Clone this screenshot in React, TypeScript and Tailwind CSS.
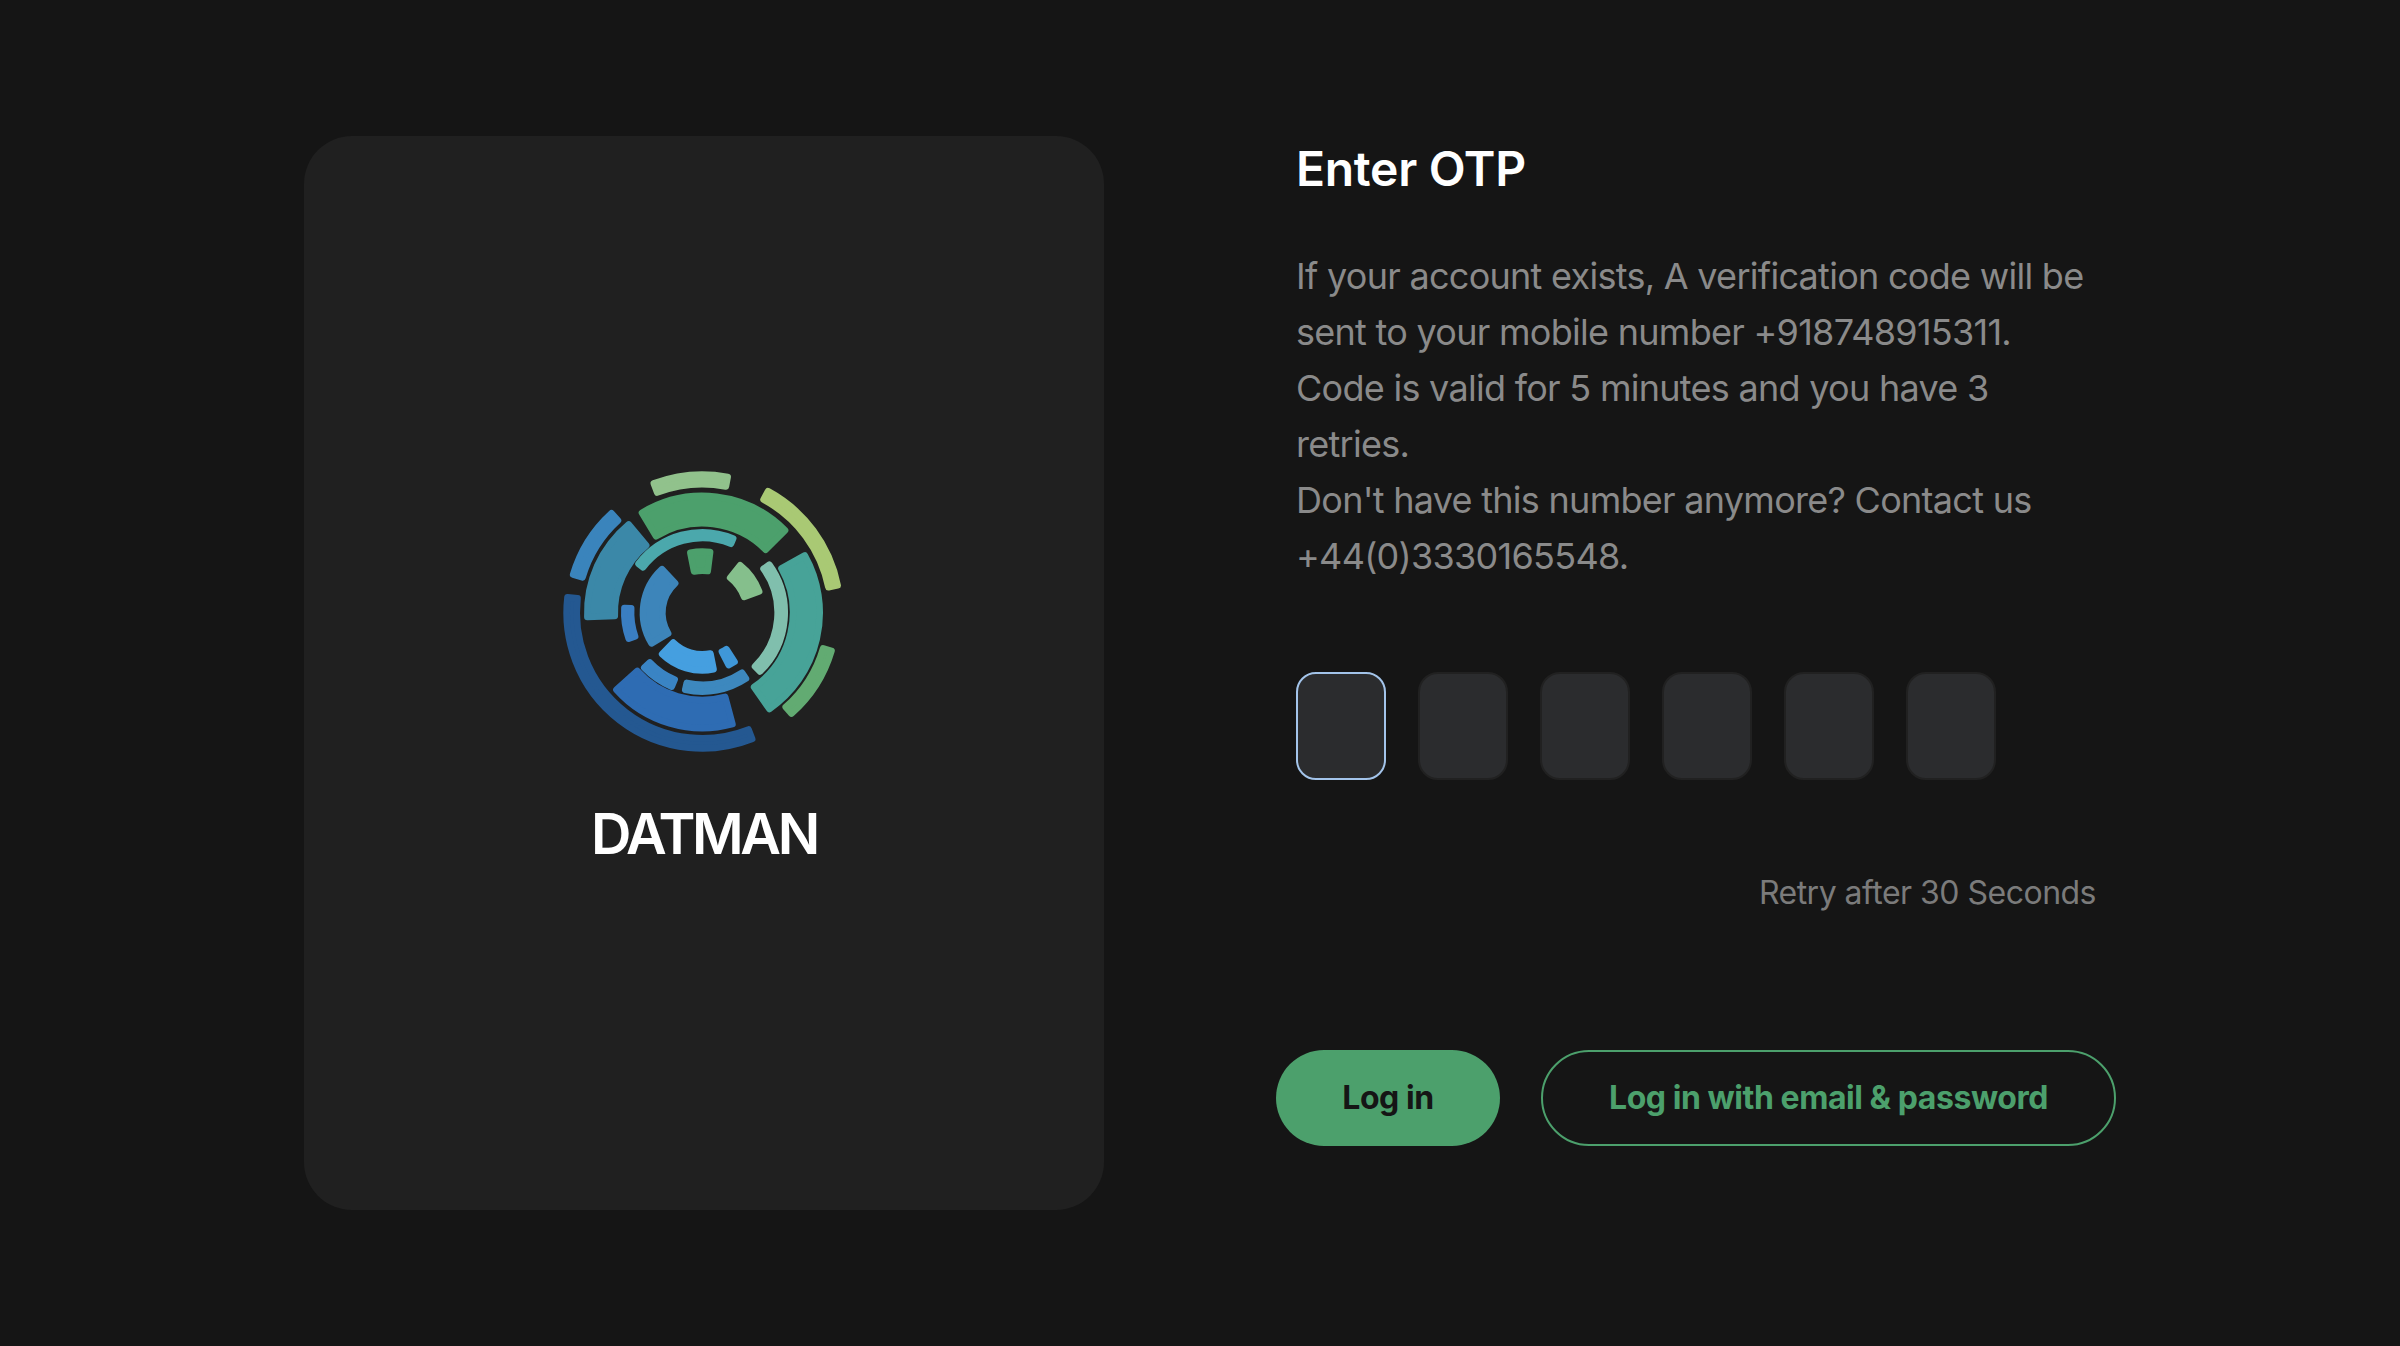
import React from 'react';

const font = { fontFamily: 'Inter, "Noto Sans", sans-serif' };

// ring segment in logo coords, angles clockwise from 12 o'clock
const CX = 490;
const CY = 488;
const ROUND = 20;

const pt = (r: number, deg: number) => {
  const a = (deg * Math.PI) / 180;
  return `${(CX + r * Math.sin(a)).toFixed(1)} ${(CY - r * Math.cos(a)).toFixed(1)}`;
};

const seg = (r1: number, r2: number, a1: number, a2: number) => {
  const inner = r1 + ROUND / 2;
  const outer = r2 - ROUND / 2;
  const mid = (r1 + r2) / 2;
  const pad = ((ROUND / 2 / mid) * 180) / Math.PI;
  const s = a1 + pad;
  const e = a2 - pad;
  const large = e - s > 180 ? 1 : 0;
  return `M${pt(outer, s)} A${outer} ${outer} 0 ${large} 1 ${pt(outer, e)} L${pt(inner, e)} A${inner} ${inner} 0 ${large} 0 ${pt(inner, s)} Z`;
};

const segments: [number, number, number, number, string][] = [
  // outer ring
  [375, 424, -22, 12, '#91c28c'],
  [376, 424, 27, 80, '#a9c974'],
  [368, 414, 105, 140, '#62ab72'],
  [367, 417, 157, 278, '#245891'],
  [365, 414, 285, 319, '#3a84bc'],
  // second ring
  [258, 360, -33, 47, '#4ca06c'],
  [262, 362, 59, 147, '#47a398'],
  [252, 356, 163, 230, '#2e6cb3'],
  [253, 355, 266, 322, '#3b88a8'],
  // thin ring
  [214, 251, -55, 25, '#4ba8ac'],
  [216, 257, 52, 138, '#80bfad'],
  [206, 247, 144, 195, '#3d88be'],
  [207, 250, 200, 229, '#3a84c4'],
  [204, 244, 248, 276, '#3a7ec2'],
  // inner ring
  [116, 193, -15, 11, '#4ca06c'],
  [124, 192, 35, 73, '#85bf8c'],
  [115, 183, 165, 228, '#459fe0'],
  [121, 186, 143, 157, '#3f97d8'],
  [110, 188, 235, 321, '#3d85ba'],
];

const Logo = () => (
  <svg viewBox="0 0 990 960" className="w-[330px] h-[320px] shrink-0">
    {segments.map(([r1, r2, a1, a2, color], i) => (
      <path key={i} d={seg(r1, r2, a1, a2)} fill={color} stroke={color} strokeWidth={ROUND} strokeLinejoin="round" />
    ))}
  </svg>
);

export default function App() {
  return (
    <div className="h-[1346px] bg-[#151515] flex pt-[136px] pl-[304px] overflow-hidden" style={font}>
      {/* Brand card */}
      <div className="w-[800px] h-[1074px] bg-[#202020] rounded-[48px] flex flex-col items-center pt-[314px]">
        <Logo />
        <div className="mt-[30px] text-[56px] leading-[68px] font-semibold text-white tracking-[-0.06em]">DATMAN</div>
      </div>

      {/* OTP form */}
      <div className="ml-[172px] w-[840px] flex flex-col">
        <div className="pl-5">
          <h1 className="mt-[3px] text-[48px] leading-[60px] font-semibold text-white tracking-[-0.006em]">Enter OTP</h1>
          <p className="mt-[49px] w-[800px] text-[36px] leading-[56px] text-[#8a8a8a] tracking-[-0.02em]">
            If your account exists, A verification code will be
            <br />
            sent to your mobile number +918748915311.
            <br />
            Code is valid for 5 minutes and you have 3
            <br />
            retries.
            <br />
            Don't have this number anymore? Contact us
            <br />
            +44(0)3330165548.
          </p>
          <div className="mt-[88px] flex gap-[32px]">
            <div className="w-[90px] h-[108px] rounded-[20px] bg-[#2b2c2e] border-2 border-[#a3c4ea]" />
            {[1, 2, 3, 4, 5].map((n) => (
              <div key={n} className="w-[90px] h-[108px] rounded-[20px] bg-[#2b2c2e] border-2 border-[#212121]" />
            ))}
          </div>
          <div className="mt-[93px] w-[800px] text-right text-[32px] leading-[40px] text-[#7b7b7b] tracking-[-0.016em]">
            Retry after 30 Seconds
          </div>
        </div>
        <div className="mt-[137px] flex gap-[41px]">
          <button className="w-[224px] h-[96px] rounded-[48px] bg-[#4ca06c] text-[#151515] text-[32px] font-bold tracking-[-0.014em]">
            Log in
          </button>
          <button className="w-[575px] h-[96px] rounded-[48px] border-2 border-[#4ca06c] text-[#4ca06c] text-[32px] font-bold tracking-[-0.014em]">
            Log in with email &amp; password
          </button>
        </div>
      </div>
    </div>
  );
}
